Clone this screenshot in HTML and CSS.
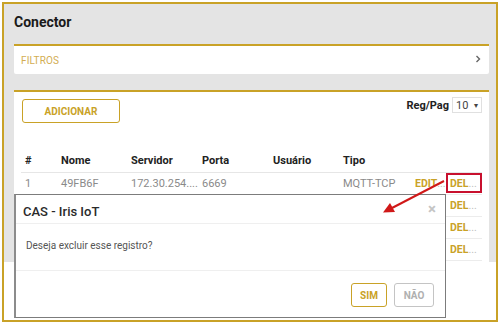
FILE: index.html
```html
<!DOCTYPE html>
<html lang="pt">
<head>
<meta charset="utf-8">
<link rel="stylesheet" href="styles.css">
</head>
<body>
<div class="frame">
  <h1 class="title">Conector</h1>
  <div class="card filters">
    <span class="filters-label">FILTROS</span>
    <svg class="chev" width="6" height="8" viewBox="0 0 6 8"><path d="M1.5 1 L4.5 4 L1.5 7" fill="none" stroke="#666" stroke-width="1.4"/></svg>
  </div>
  <div class="card list">
    <div class="toolbar">
      <button class="btn btn-gold btn-add">ADICIONAR</button>
      <div class="perpage">
        <span class="perpage-label">Reg/Pag</span>
        <span class="select">10 <span class="caret">▾</span></span>
      </div>
    </div>
    <table class="grid">
      <thead>
        <tr><th class="c-id">#</th><th class="c-nome">Nome</th><th class="c-srv">Servidor</th><th class="c-porta">Porta</th><th class="c-user">Usuário</th><th class="c-tipo">Tipo</th><th class="c-edit"></th><th class="c-del"></th></tr>
      </thead>
      <tbody>
        <tr><td>1</td><td>49FB6F</td><td>172.30.254....</td><td>6669</td><td></td><td>MQTT-TCP</td><td class="act">EDIT<span class="dots">...</span></td><td class="act">DEL<span class="dots">...</span></td></tr>
        <tr><td></td><td></td><td></td><td></td><td></td><td></td><td></td><td class="act">DEL<span class="dots">...</span></td></tr>
        <tr><td></td><td></td><td></td><td></td><td></td><td></td><td></td><td class="act">DEL<span class="dots">...</span></td></tr>
        <tr><td></td><td></td><td></td><td></td><td></td><td></td><td></td><td class="act">DEL<span class="dots">...</span></td></tr>
      </tbody>
    </table>
  </div>
</div>

<div class="highlight"></div>

<div class="modal">
  <div class="modal-head">
    <span class="modal-title">CAS - Iris IoT</span>
    <span class="close">×</span>
  </div>
  <div class="modal-body">Deseja excluir esse registro?</div>
  <div class="modal-foot">
    <button class="btn btn-gold btn-small">SIM</button>
    <button class="btn btn-grey btn-small">NÃO</button>
  </div>
</div>

<svg class="arrow" width="502" height="325" viewBox="0 0 502 325">
  <line x1="444" y1="181" x2="392" y2="208" stroke="#d01818" stroke-width="2"/>
  <path d="M383 212.5 L390 203 L395 212 Z" fill="#d01818"/>
</svg>
</body>
</html>
```

FILE: styles.css
```css
* { box-sizing: border-box; }
html, body { margin: 0; padding: 0; background: #fff; }
body {
  font-family: Roboto, "Liberation Sans", sans-serif;
  width: 502px;
  height: 325px;
  position: relative;
  overflow: hidden;
}
.frame {
  margin: 2px 0 0 2px;
  width: 496px;
  height: 320px;
  border: 2px solid #c9a227;
  background: linear-gradient(#e4e4e4 258px, #ffffff 258px);
  padding: 0 7px 0 10px;
  display: flex;
  flex-direction: column;
}
.title {
  margin: 0;
  height: 40px;
  line-height: 36px;
  font-size: 14px;
  font-weight: 700;
  color: #1a1a1a;
}
.card {
  background: #fff;
  border-top: 2px solid #c9a227;
}
.filters {
  height: 30px;
  display: flex;
  align-items: center;
  justify-content: space-between;
  padding: 0 8px 0 7px;
  border-radius: 0 0 2px 2px;
}
.filters-label {
  font-size: 10px;
  color: #d2ad52;
  letter-spacing: 0.1px;
}
.chev { margin-top: -3px; }
.list {
  margin-top: 16px;
  flex: 1;
  padding: 7px 7px 0 7px;
}
.toolbar {
  display: flex;
  justify-content: space-between;
  align-items: flex-start;
  padding-left: 1px;
}
.btn {
  font-family: Roboto, "Liberation Sans", sans-serif;
  font-weight: 700;
  background: #fff;
  border-radius: 3px;
  padding: 0;
  cursor: pointer;
}
.btn-gold {
  border: 1.5px solid #c9a227;
  color: #c9a227;
}
.btn-grey {
  border: 1.5px solid #c4c4c4;
  color: #b0b0b0;
}
.btn-add {
  width: 98px;
  height: 24px;
  font-size: 10px;
}
.perpage {
  display: flex;
  align-items: center;
  gap: 3px;
  margin-top: -2px;
}
.perpage-label {
  font-size: 11px;
  font-weight: 700;
  color: #222;
}
.select {
  width: 30px;
  height: 16px;
  border: 1px solid #e0e0e0;
  font-size: 11px;
  color: #444;
  display: flex;
  align-items: center;
  justify-content: space-between;
  padding: 0 3px 0 3px;
}
.caret { font-size: 8px; color: #444; }
.grid {
  margin-top: 25px;
  width: 461px;
  border-collapse: collapse;
  table-layout: fixed;
  font-size: 11px;
}
.grid th, .grid td {
  text-align: left;
  padding: 0 0 0 4px;
  white-space: nowrap;
  overflow: hidden;
}
.grid th {
  font-weight: 700;
  color: #222;
  height: 24px;
  vertical-align: middle;
  padding-top: 1px;
  border-bottom: 1px solid #e6e6e6;
}
.grid td {
  height: 22px;
  color: #8a8a8a;
  border-bottom: 1px solid #ececec;
}
.c-id { width: 36px; }
.c-nome { width: 70px; }
.c-srv { width: 71px; }
.c-porta { width: 71px; }
.c-user { width: 70px; }
.c-tipo { width: 72px; }
.c-edit { width: 35px; }
.c-del { width: 36px; }
.grid td.act {
  color: #c9a227;
  font-weight: 700;
  font-size: 10.5px;
}
.dots { color: #bdbdbd; font-weight: 400; }
.highlight {
  position: absolute;
  left: 446px;
  top: 173px;
  width: 36px;
  height: 20px;
  border: 2px solid #c8102e;
}
.modal {
  position: absolute;
  left: 14px;
  top: 194px;
  width: 432px;
  height: 124px;
  background: #fff;
  border: 1px solid #7c7c7c;
  border-left: 2px solid #8c8c8c;
  display: flex;
  flex-direction: column;
}
.modal-head {
  height: 29px;
  border-bottom: 1px solid #efefef;
  display: flex;
  align-items: center;
  justify-content: space-between;
  padding: 5px 9px 0 7px;
}
.modal-title {
  font-size: 13px;
  font-weight: 500;
  color: #2a2a2a;
}
.close {
  font-size: 15px;
  font-weight: 700;
  color: #c4c4c4;
  margin-top: -5px;
}
.modal-body {
  height: 47px;
  border-bottom: 1px solid #efefef;
  display: flex;
  align-items: center;
  padding: 0 0 4px 10px;
  font-size: 10px;
  color: #555;
}
.modal-foot {
  display: flex;
  justify-content: flex-end;
  gap: 7px;
  padding: 12px 11px 0 0;
}
.btn-small {
  height: 24px;
  font-size: 10px;
}
.btn-small.btn-gold { width: 36px; }
.btn-small.btn-grey { width: 40px; }
.arrow {
  position: absolute;
  left: 0;
  top: 0;
  pointer-events: none;
}
```
